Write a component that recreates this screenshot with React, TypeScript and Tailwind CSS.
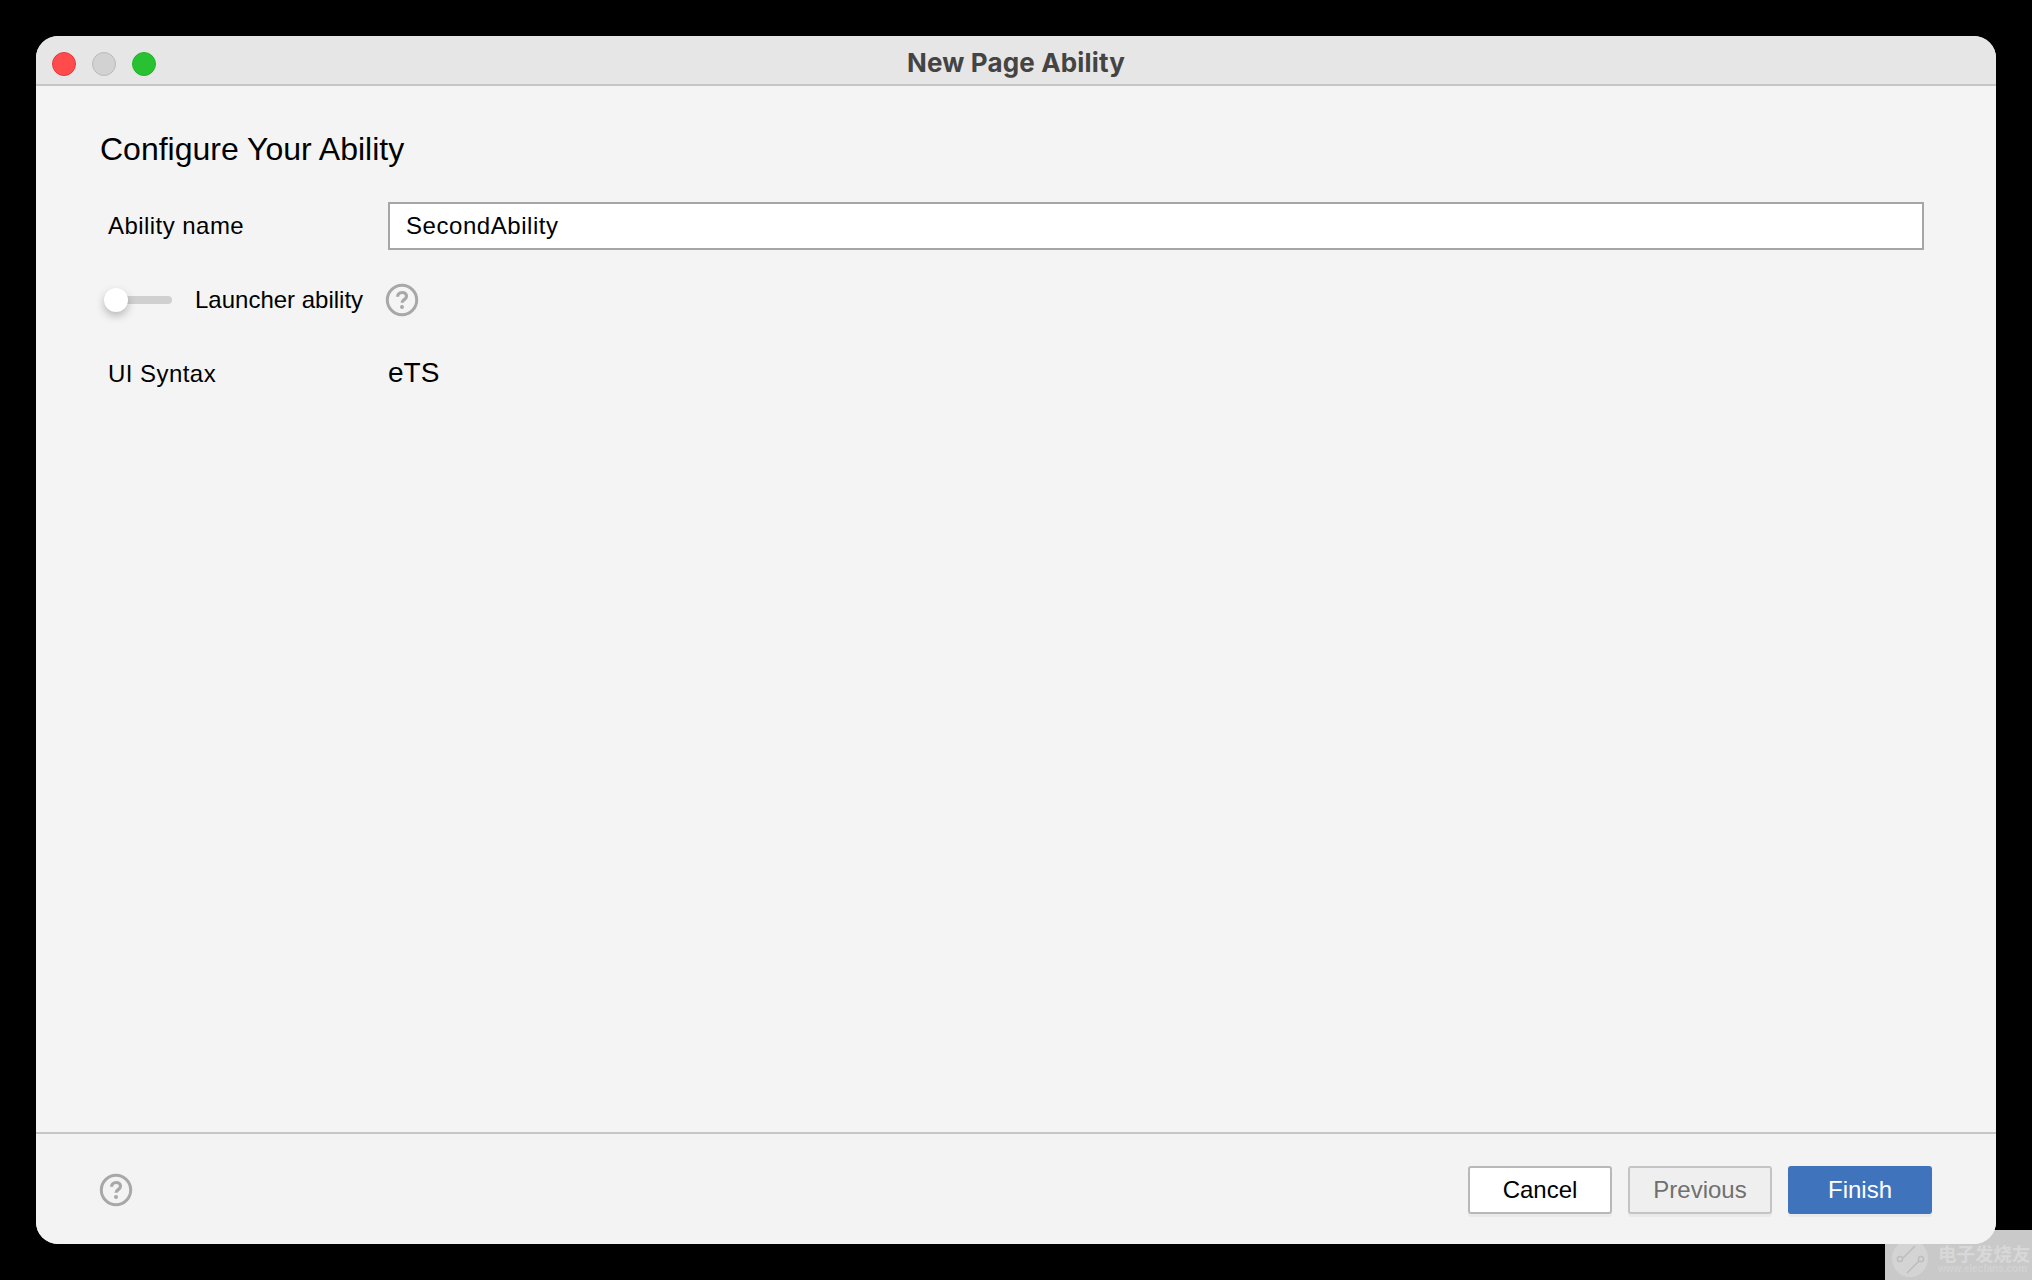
const sans = "font-['Liberation_Sans',Arial,sans-serif]";

function HelpIcon() {
  return (
    <svg width="34" height="34" viewBox="0 0 34 34" className="shrink-0 blur-[0.4px]">
      <circle cx="17" cy="17" r="14.7" fill="none" stroke="#a8a8a8" strokeWidth="3" />
      <path d="M12.6 13.8c0-2.6 1.9-4.3 4.5-4.3s4.4 1.6 4.4 3.8c0 3.4-4.4 3.2-4.5 6.4" fill="none" stroke="#a8a8a8" strokeWidth="3.2" />
      <circle cx="17" cy="24" r="2" fill="#a8a8a8" />
    </svg>
  );
}

function Light({ className }: { className: string }) {
  return <div className={`h-6 w-6 rounded-full border ${className}`} />;
}

function Btn({ children, className }: { children: string; className: string }) {
  return (
    <div className={`flex h-12 w-[144px] items-center justify-center rounded-[3px] text-[24px] shadow-[0_3px_1px_rgba(0,0,0,0.04)] ${className}`}>
      {children}
    </div>
  );
}

export default function App() {
  return (
    <div className={`relative flex h-[1280px] w-[2032px] overflow-hidden bg-black p-[36px] ${sans}`}>
      <div className="relative z-10 flex min-w-0 flex-1 flex-col overflow-hidden rounded-[22px] bg-[#f4f4f4]">
        <header className="relative flex h-[50px] items-center gap-4 border-b-2 border-[#c6c6c6] bg-[#e6e6e6] pl-4 pt-2">
          <Light className="border-[#e23c3c] bg-[#ff4b4b]" />
          <Light className="border-[#b9b9b9] bg-[#d2d2d2]" />
          <Light className="border-[#25b32f] bg-[#28c132]" />
          <div className="absolute inset-0 flex items-center justify-center pt-[5px] font-['Inter',sans-serif] text-[26px] font-bold tracking-[0.15px] text-[#444444]">
            New Page Ability
          </div>
        </header>

        <main className="flex flex-1 flex-col pl-16 pr-[72px] text-black">
          <h1 className="mt-[45px] h-[36px] text-[32px] leading-[36px]">Configure Your Ability</h1>
          <div className="mt-[35px] flex h-12 items-center">
            <div className="w-[288px] pl-2 text-[24px] tracking-[0.45px]">Ability name</div>
            <div className="flex h-12 flex-1 items-center border-2 border-[#a6a6a6] bg-white pl-4 text-[24px] tracking-[0.55px]">SecondAbility</div>
          </div>
          <div className="mt-[26px] flex h-[48px] items-center">
            <div className="relative ml-1 h-2 w-[68px] rounded-full bg-[#d0d0d0]">
              <div className="absolute left-0 top-[-8px] h-6 w-6 rounded-full bg-white shadow-[0_4px_8px_rgba(0,0,0,0.25)]" />
            </div>
            <div className="ml-[23px] w-[190px] text-[24px]">Launcher ability</div>
            <HelpIcon />
          </div>
          <div className="mt-[26px] flex h-12 items-center">
            <div className="w-[288px] pl-2 text-[24px] tracking-[0.45px]">UI Syntax</div>
            <div className="pb-[2px] text-[28px]">eTS</div>
          </div>
        </main>

        <footer className="flex h-[112px] items-center border-t-2 border-[#c6c6c6] bg-[#f3f3f3] pl-[63px] pr-16 pt-[2px]">
          <HelpIcon />
          <div className="ml-auto flex gap-4">
            <Btn className="border-2 border-[#b8b8b8] bg-white text-black">Cancel</Btn>
            <Btn className="border-2 border-[#c4c4c4] bg-[#efefef] text-[#707070]">Previous</Btn>
            <Btn className="bg-[#3f74bd] text-white">Finish</Btn>
          </div>
        </footer>
      </div>

      <div className="absolute bottom-0 right-0 z-0 h-[50px] w-[147px] overflow-hidden bg-[#c9c9c9]">
        <svg width="44" height="50" viewBox="0 0 44 50" className="absolute left-[6px] top-0">
          <path d="M26 0c1 6 0 9-2 10 7 2 13 9 13 18 0 11-8 19-18 19S1 39 1 28c0-10 8-18 18-18 3 0 5-3 7-10z" fill="#d4d4d4" />
          <circle cx="9" cy="29" r="2.6" fill="none" stroke="#bdbdbd" strokeWidth="1.5" />
          <circle cx="30" cy="29" r="2.6" fill="none" stroke="#bdbdbd" strokeWidth="1.5" />
          <path d="M12 28l12-12M28 31L16 43" fill="none" stroke="#bdbdbd" strokeWidth="1.5" />
        </svg>
        <div className="absolute left-[53px] top-[9px] whitespace-nowrap font-['Noto_Sans_CJK_SC',sans-serif] text-[18.5px] font-bold leading-[28px] text-[#d8d8d8]">
          电子发烧友
        </div>
        <div className="absolute left-[53px] top-[33px] whitespace-nowrap text-[10px] font-bold leading-[12px] text-[#d2d2d2]">
          www.elecfans.com
        </div>
      </div>
    </div>
  );
}
